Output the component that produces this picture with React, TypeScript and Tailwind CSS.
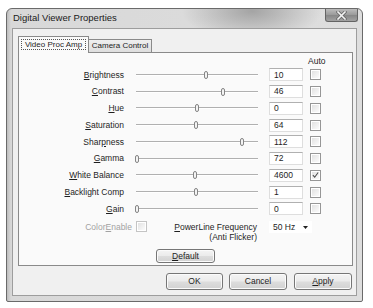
import React from "react";

// Slider rows: label, underlined key index, value, thumb offset (px from slider box left), auto checked
const ROWS = [
  { label: "Brightness", k: 0, value: "10", thumb: 74, auto: false },
  { label: "Contrast", k: 0, value: "46", thumb: 91, auto: false },
  { label: "Hue", k: 0, value: "0", thumb: 65, auto: false },
  { label: "Saturation", k: 0, value: "64", thumb: 64, auto: false },
  { label: "Sharpness", k: 4, value: "112", thumb: 110, auto: false },
  { label: "Gamma", k: 0, value: "72", thumb: 5, auto: false },
  { label: "White Balance", k: 0, value: "4600", thumb: 63, auto: true },
  { label: "Backlight Comp", k: 0, value: "1", thumb: 64, auto: false },
  { label: "Gain", k: 0, value: "0", thumb: 5, auto: false },
];

function Key({ text, k }: { text: string; k: number }) {
  return (
    <>
      {text.slice(0, k)}
      <span className="underline underline-offset-[1px] decoration-[1px]">{text[k]}</span>
      {text.slice(k + 1)}
    </>
  );
}

function Checkbox({ checked, dim }: { checked?: boolean; dim?: boolean }) {
  return (
    <div
      className={`w-[11px] h-[11px] border ${
        dim ? "border-[#c4c4c4]" : "border-[#969696]"
      } bg-white p-[1px]`}
    >
      <div className="w-full h-full bg-[linear-gradient(135deg,#e2e2e2,#fbfbfb)] flex items-center justify-center">
        {checked && (
          <svg width="8" height="8" viewBox="0 0 8 8">
            <path d="M1 4.2 L3.1 6.5 L7 1.2" fill="none" stroke="#4a4a4a" strokeWidth="1.2" />
          </svg>
        )}
      </div>
    </div>
  );
}

function Slider({ thumb }: { thumb: number }) {
  return (
    <div className="relative w-[130px] h-full flex items-center ml-[8px]">
      <div className="mx-[4px] flex-1 h-[2px] border-t border-[#b0b0b0] bg-white" />
      <div
        className="absolute top-1/2 -translate-y-1/2 -translate-x-1/2 w-[4px] h-[8px] rounded-full border border-[#858585] bg-[#f4f4f4]"
        style={{ left: thumb }}
      />
    </div>
  );
}

function Button({ children, w }: { children: React.ReactNode; w: string }) {
  return (
    <div
      className={`${w} h-full rounded-[3px] border border-[#767676] bg-[linear-gradient(#f4f4f4_0%,#ebebeb_48%,#dddddd_52%,#d2d2d2_100%)] shadow-[inset_0_0_0_1px_#fbfbfb] flex items-center justify-center text-[8.5px] text-[#1e1e1e]`}
    >
      {children}
    </div>
  );
}

export default function App() {
  return (
    <div className="w-[373px] h-[308px] bg-white pl-[6px] pt-[8px] font-['Liberation_Sans',Arial,sans-serif] text-[#1e1e1e]">
      <div className="relative w-[357px] h-[294px] rounded-t-[6px] rounded-b-[2px] border border-[#6a6a6a] flex flex-col overflow-hidden bg-[radial-gradient(ellipse_70px_30px_at_245px_2px,#a4a4a4_0%,rgba(200,200,200,0)_100%),linear-gradient(90deg,#bdbdbd_0px,#d8d8d8_4px,#dedede_100%)]">
        {/* Title bar */}
        <div className="h-[19px] flex items-center pl-[6px] text-[9.5px] text-[#202020]">
          Digital Viewer Properties
        </div>

        {/* Close button */}
        <div className="absolute right-[4px] top-0 w-[33px] h-[13px] rounded-b-[3px] border border-t-0 border-[#646464] bg-[linear-gradient(#bcbcbc,#999999_50%,#868686_51%,#a2a2a2)] flex items-center justify-center">
          <svg width="11" height="9" viewBox="0 0 11 9">
            <path d="M2 1 L9 8 M9 1 L2 8" stroke="#6a6a6a" strokeWidth="3.2" strokeLinecap="square" />
            <path d="M2 1 L9 8 M9 1 L2 8" stroke="#f4f4f4" strokeWidth="1.6" strokeLinecap="square" />
          </svg>
        </div>

        {/* Client area */}
        <div className="flex-1 mx-[5px] mb-[5px] border border-[#9d9d9d] bg-[#f0f0f0] pt-[7px] pl-[5px] pr-[3px] flex flex-col">
          {/* Tabs */}
          <div className="h-[16px] flex items-end text-[8px]">
            <div className="relative z-10 w-[71px] h-[17px] -mb-[1px] border border-b-0 border-[#8a8a8a] bg-[#fafafa] px-[2px] pt-[2px] pb-[3px]">
              <div className="h-full border border-dotted border-[#555] flex items-center justify-center">
                Video Proc Amp
              </div>
            </div>
            <div className="w-[63px] h-[13px] border border-l-0 border-b-0 border-[#8a8a8a] bg-[linear-gradient(#efefef,#dedede)] flex items-center justify-center">
              Camera Control
            </div>
          </div>

          {/* Tab panel */}
          <div className="h-[214px] border border-[#8a8a8a] bg-[#fafafa] pt-[2.5px] flex flex-col text-[8.5px]">
            <div className="h-[11px] flex items-center pl-[289px]">Auto</div>
            {ROWS.map((r) => (
              <div key={r.label} className="h-[16.75px] flex items-center">
                <div className="w-[105px] text-right leading-none">
                  <Key text={r.label} k={r.k} />
                </div>
                <Slider thumb={r.thumb} />
                <div className="ml-[7px] w-[34px] h-[13px] bg-white border border-[#dedede] border-t-[#b0b0b0] pl-[4px] flex items-center leading-none">
                  {r.value}
                </div>
                <div className="ml-[7px]">
                  <Checkbox checked={r.auto} />
                </div>
              </div>
            ))}

            <div className="mt-[5px] h-[20px] flex items-start leading-[10px]">
              <div className="w-[113px] text-right text-[#a2a2a2]">
                <Key text="ColorEnable" k={5} />
              </div>
              <div className="ml-[4px] -mt-[1px]">
                <Checkbox dim />
              </div>
              <div className="w-[110px] text-right">
                <div>
                  <Key text="PowerLine Frequency" k={0} />
                </div>
                <div>(Anti Flicker)</div>
              </div>
              <div className="ml-[12px] w-[43px] h-[12px] -mt-[1px] bg-white flex items-center pl-[4px]">
                <span>50 Hz</span>
                <svg className="ml-auto mr-[4px]" width="5" height="3" viewBox="0 0 5 3">
                  <path d="M0 0 L5 0 L2.5 3 Z" fill="#222" />
                </svg>
              </div>
            </div>

            <div className="mt-[7px] h-[14px] flex justify-center">
              <Button w="w-[59px]">
                <Key text="Default" k={0} />
              </Button>
            </div>
          </div>

          {/* Dialog buttons */}
          <div className="mt-[7px] h-[17px] flex justify-end pr-[1px]">
            <Button w="w-[57px]">OK</Button>
            <div className="ml-[6px] h-full">
              <Button w="w-[58px]">Cancel</Button>
            </div>
            <div className="ml-[7px] h-full">
              <Button w="w-[58px]">
                <Key text="Apply" k={0} />
              </Button>
            </div>
          </div>
        </div>
      </div>
    </div>
  );
}
